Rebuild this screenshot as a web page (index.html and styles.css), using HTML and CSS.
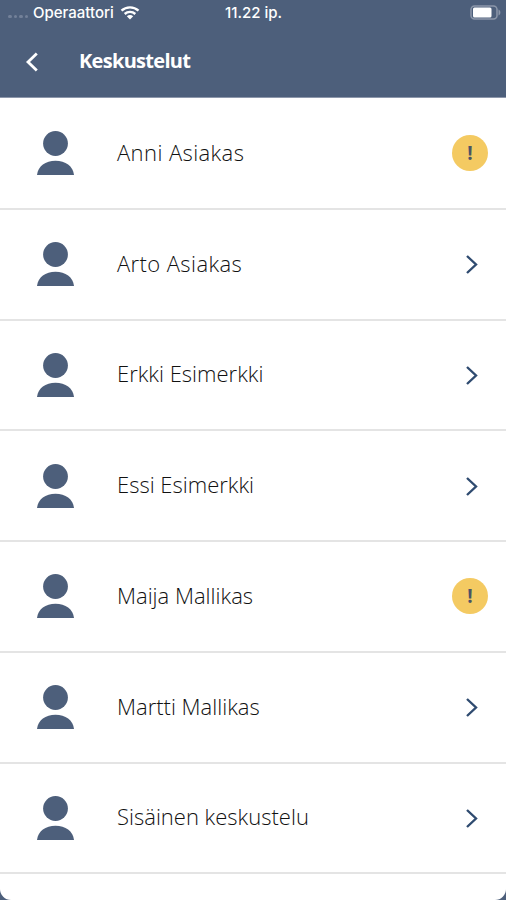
FILE: index.html
```html
<!DOCTYPE html>
<html lang="fi">
<head>
    <meta charset="UTF-8">
    <meta name="viewport" content="width=device-width, initial-scale=1.0">
    <title>Keskustelut</title>
    <link rel="stylesheet" href="styles.css">
</head>
<body>
    <svg width="0" height="0" class="symbols">
        <symbol id="person" viewBox="0 0 38 44">
            <circle cx="18.500" cy="12.5" r="12.4"/>
            <path d="M0 44C1 35 8.500 29.700 18.500 29.700S36 35 37 44z"/>
        </symbol>
        <symbol id="arrow" viewBox="0 0 14 20">
            <path d="M2 2L11 10.500L2 19"/>
        </symbol>
    </svg>
    <div class="screen">
        <header>
            <div class="status-bar">
                <div class="carrier">
                    <span class="dots"><i></i><i></i><i></i><i></i></span>
                    <span class="operator">Operaattori</span>
                    <svg class="wifi" width="20" height="14" viewBox="0 0 20 14">
                        <path d="M1.500 4.700C6.300 0.200 13.700 0.200 18.500 4.700M4.700 8C7.700 5.200 12.300 5.200 15.300 8"/>
                        <path class="fill" d="M6.800 10.200C8.600 8.500 11.400 8.500 13.200 10.200L10 13.500z"/>
                    </svg>
                </div>
                <span class="time">11.22 ip.</span>
                <svg class="battery" width="32" height="15" viewBox="0 0 32 15">
                    <rect class="case" x="1" y="1" width="26" height="13" rx="3.500"/>
                    <rect class="level" x="3" y="2.500" width="18.500" height="10" rx="1.500"/>
                    <path class="tip" d="M28.500 4.500C31 5.500 31 9.500 28.500 10.500z"/>
                </svg>
            </div>
            <div class="title-bar">
                <svg class="back" width="14" height="20" viewBox="0 0 14 20"><path d="M11.800 1.500L3 10L11.800 18.500"/></svg>
                <h1>Keskustelut</h1>
            </div>
        </header>
        <ul>
            <li><svg class="person"><use href="#person"/></svg><span class="name wide">Anni Asiakas</span><b class="alert">!</b></li>
            <li><svg class="person"><use href="#person"/></svg><span class="name wide">Arto Asiakas</span><svg class="arrow"><use href="#arrow"/></svg></li>
            <li><svg class="person"><use href="#person"/></svg><span class="name">Erkki Esimerkki</span><svg class="arrow"><use href="#arrow"/></svg></li>
            <li><svg class="person"><use href="#person"/></svg><span class="name">Essi Esimerkki</span><svg class="arrow"><use href="#arrow"/></svg></li>
            <li><svg class="person"><use href="#person"/></svg><span class="name">Maija Mallikas</span><b class="alert">!</b></li>
            <li><svg class="person"><use href="#person"/></svg><span class="name">Martti Mallikas</span><svg class="arrow"><use href="#arrow"/></svg></li>
            <li><svg class="person"><use href="#person"/></svg><span class="name">Sisäinen keskustelu</span><svg class="arrow"><use href="#arrow"/></svg></li>
        </ul>
    </div>
</body>
</html>
```
FILE: styles.css
```css
body {
    margin: 0;
    background-color: #4d5f7b;
    font-family: "Open Sans", "Noto Sans", sans-serif;
}
.symbols {
    display: block;
}
.screen {
    height: 900px;
    overflow: hidden;
    background-color: #ffffff;
    border-radius: 0 0 11px 11px;
}
header {
    height: 98px;
    box-sizing: border-box;
    background-color: #4d5f7b;
    border-bottom: 1px solid #8d97ab;
    color: #ffffff;
}
.status-bar {
    display: grid;
    grid-template-columns: 1fr auto 1fr;
    align-items: center;
    height: 25px;
    padding: 0 5px 0 8px;
    font-family: Inter, sans-serif;
    font-size: 15px;
    font-weight: 500;
}
.carrier {
    display: flex;
    align-items: center;
}
.dots {
    display: flex;
    gap: 2px;
    margin: 8px 5px 0 0;
}
.dots i {
    width: 3.5px;
    height: 3.5px;
    border-radius: 50%;
    background-color: #738199;
}
.wifi {
    margin-left: 6px;
    fill: none;
    stroke: #ffffff;
    stroke-width: 2.4;
}
.wifi .fill {
    fill: #ffffff;
    stroke: none;
}
.time {
    margin-right: 2px;
}
.battery {
    justify-self: end;
    margin-right: -1px;
}
.case {
    fill: none;
    stroke: #8c97aa;
    stroke-width: 1.5;
}
.level {
    fill: #ffffff;
}
.tip {
    fill: #8c97aa;
}
.title-bar {
    display: flex;
    align-items: center;
    height: 73px;
    padding-left: 25px;
}
.back {
    fill: none;
    stroke: #ffffff;
    stroke-width: 2.8;
}
h1 {
    margin: 0 0 2px 40px;
    font-size: 20px;
    font-weight: 700;
    letter-spacing: -0.7px;
}
ul {
    margin: 0;
    padding: 1px 0 0;
    list-style: none;
}
li {
    display: flex;
    align-items: center;
    height: 110.75px;
    box-sizing: border-box;
    padding: 0 18px 0 37px;
    border-bottom: 2px solid #e4e4e4;
}
.person {
    width: 38px;
    height: 44px;
    fill: #4d5f7b;
}
.name {
    flex: 1;
    margin: 0 0 3px 42px;
    color: #111111;
    font-size: 22px;
    font-weight: 300;
    white-space: nowrap;
}
.wide {
    letter-spacing: 0.4px;
}
.arrow {
    width: 14px;
    height: 20px;
    margin-right: 9px;
    fill: none;
    stroke: #2f4b70;
    stroke-width: 2.4;
}
.alert {
    width: 36px;
    height: 36px;
    border-radius: 50%;
    background-color: #f4ca62;
    color: #4b5365;
    font-size: 19px;
    line-height: 37px;
    text-align: center;
}
```
